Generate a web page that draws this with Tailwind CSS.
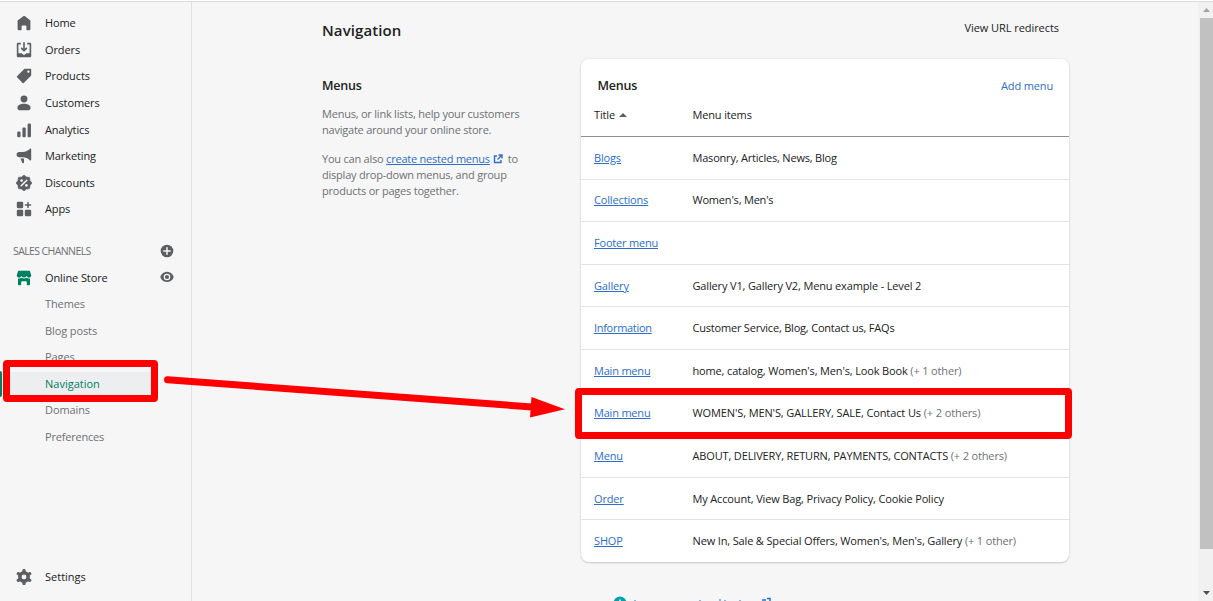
<!DOCTYPE html>
<html lang="en">
<head>
<meta charset="utf-8">
<title>Navigation</title>
<script src="https://cdn.jsdelivr.net/npm/@tailwindcss/browser@4"></script>
</head>
<body class="relative h-[601px] w-[1213px] overflow-hidden bg-[#f6f6f6] font-['Open_Sans','Noto_Sans',sans-serif] text-[11px] text-[#202223]">
<div class="flex h-full flex-col">
  <div class="h-0.5 shrink-0 border-b border-[#d9dbdb] bg-white"></div>
  <div class="flex min-h-0 flex-1">
    <aside class="flex w-48 shrink-0 flex-col border-r border-[#dfe1e2] pt-2 font-medium tracking-[-0.1px]">
      <nav class="flex flex-col">
        <a class="flex h-[26.6px] items-center gap-[13px] pl-4"><svg class="size-4 fill-[#5c5f62]" viewBox="0 0 20 20"><path d="M10 1 2 7v10.500Q2 19 3.500 19H6q1 0 1-1v-4q0-1 1-1h4q1 0 1 1v4q0 1 1 1h2.500q1.500 0 1.500-1.500V7L11.300 1.500Q10 .500 8.700 1.500Z"/></svg><span>Home</span></a>
        <a class="flex h-[26.6px] items-center gap-[13px] pl-4"><svg class="size-4 fill-[#5c5f62]" viewBox="0 0 20 20"><path d="M11 1a1 1 0 1 0-2 0v7.586L7.707 7.293a1 1 0 0 0-1.414 1.414l3 3a1 1 0 0 0 1.414 0l3-3a1 1 0 0 0-1.414-1.414L11 8.586V1z"/><path d="M3 14V3h3V1H2.500A1.500 1.500 0 0 0 1 2.500v15A1.500 1.500 0 0 0 2.500 19h15a1.500 1.500 0 0 0 1.500-1.500v-15A1.500 1.500 0 0 0 17.500 1H14v2h3v11h-3.500c-.775 0-1.388.662-1.926 1.244C11.200 15.640 10.800 16 10.500 16h-1c-.300 0-.700-.360-1.074-.756C7.888 14.662 7.275 14 6.500 14H3z"/></svg><span>Orders</span></a>
        <a class="flex h-[26.6px] items-center gap-[13px] pl-4"><svg class="size-4 fill-[#5c5f62]" viewBox="0 0 20 20"><path fill-rule="evenodd" d="m10.293 1.293-9 9a1 1 0 0 0 0 1.414l7 7a1 1 0 0 0 1.414 0l9-9A1 1 0 0 0 19 9V2a1 1 0 0 0-1-1h-7a1 1 0 0 0-.707.293zM15.500 6a1.500 1.500 0 1 0 0-3 1.500 1.500 0 0 0 0 3z"/></svg><span>Products</span></a>
        <a class="flex h-[26.6px] items-center gap-[13px] pl-4"><svg class="size-4 fill-[#5c5f62]" viewBox="0 0 20 20"><circle cx="10" cy="5" r="4.300"/><path d="M1.800 16c0-3 3.200-5 8.200-5s8.200 2 8.200 5c0 2-1 3-2.500 3H4.300c-1.500 0-2.500-1-2.500-3z"/></svg><span>Customers</span></a>
        <a class="flex h-[26.6px] items-center gap-[13px] pl-4"><svg class="size-4 fill-[#5c5f62]" viewBox="0 0 20 20"><rect x="1.500" y="12" width="4.200" height="7" rx="1.500"/><rect x="8" y="7" width="4.200" height="12" rx="1.500"/><rect x="14.500" y="2" width="4.200" height="17" rx="1.500"/></svg><span class="pt-px">Analytics</span></a>
        <a class="flex h-[26.6px] items-center gap-[13px] pl-4"><svg class="size-4 fill-[#5c5f62]" viewBox="0 0 20 20"><path d="M17.500 1C15 3.500 12 5 8.500 5H4a3.200 3.200 0 0 0 0 6.500h4.500c3.500 0 6.500 1.500 9 4 .700.500 1.500.200 1.500-.700V1.700c0-.900-.800-1.300-1.500-.700z"/><path d="M5.500 13H10v4.700c0 1.300-1.500 1.700-2.200.600z"/></svg><span>Marketing</span></a>
        <a class="flex h-[26.6px] items-center gap-[13px] pl-4"><svg class="size-4 fill-[#5c5f62]" viewBox="0 0 20 20"><path d="M10 0 13 2.500 17 3l.500 4L20 10l-2.500 3-.500 4-4 .500L10 20l-3-2.500L3 17l-.500-4L0 10l2.500-3L3 3l4-.500z" stroke="#5c5f62" stroke-width=".8" stroke-linejoin="round"/><path d="m6.500 13.500 7-7" stroke="#f6f6f6" stroke-width="1.900" stroke-linecap="round"/><circle cx="7" cy="7" r="1.600" fill="#f6f6f6"/><circle cx="13" cy="13" r="1.600" fill="#f6f6f6"/></svg><span>Discounts</span></a>
        <a class="flex h-[26.6px] items-center gap-[13px] pl-4"><svg class="size-4 fill-[#5c5f62]" viewBox="0 0 20 20"><rect x="1" y="1" width="8" height="8" rx="1.400"/><rect x="1" y="11" width="8" height="8" rx="1.400"/><rect x="11" y="11" width="8" height="8" rx="1.400"/><path d="M15 1.800v6.400M11.800 5h6.400" stroke="#5c5f62" stroke-width="1.900" stroke-linecap="round"/></svg><span>Apps</span></a>
      </nav>
      <div class="mt-[15px] flex h-[27px] items-center justify-between pl-[13px] pr-[17px] font-normal text-[#6d7175]"><span class="pt-px text-[10.500px] tracking-[-0.600px]">SALES CHANNELS</span><svg class="size-[14px]" viewBox="0 0 14 14"><circle cx="7" cy="7" r="6.300" fill="#5c5f62"/><path d="M7 3.800v6.400M3.800 7h6.400" stroke="#f6f6f6" stroke-width="1.500" stroke-linecap="round"/></svg></div>
      <nav class="flex flex-col text-[#6d7175]">
        <a class="flex h-[26.5px] items-center pl-4 pr-[17px] text-[#202223]"><svg class="mr-[13px] size-4 fill-[#008060]" viewBox="0 0 20 20"><path d="M3.500 1h13q.700 0 1 .700L19 6.500C19 8.500 17.800 9.500 16.200 9.500S13.500 8.500 13 7.500c-.500 1-1.500 2-3 2s-2.500-1-3-2c-.500 1-1.600 2-3.200 2S1 8.500 1 6.500l1.500-4.800q.300-.700 1-.700z"/><path d="M2.500 10.500q2.500.500 4.500-.800 3 1.800 6 0 2 1.300 4.500.800V18q0 1-1 1h-2q-1 0-1-1v-3q0-1-1-1h-5q-1 0-1 1v3q0 1-1 1h-2q-1 0-1-1z"/></svg><span class="flex-1">Online Store</span><svg class="mb-0.5 size-[14px]" viewBox="0 0 14 14"><path fill="#5c5f62" d="M7 1.700c4.400 0 6.600 4 6.600 5.300S11.400 12 7 12 .4 8.300.4 7 2.600 1.700 7 1.700z"/><circle cx="7" cy="7" r="2.700" fill="none" stroke="#f6f6f6" stroke-width="1.200"/></svg></a>
        <a class="flex h-[26.5px] items-center pl-[45px]">Themes</a>
        <a class="flex h-[26.5px] items-center pl-[45px]">Blog posts</a>
        <a class="flex h-[26.5px] items-center pl-[45px]">Pages</a>
        <a class="flex h-[26.5px] items-center tracking-normal text-[#008060]"><span class="h-[26px] w-0.5 rounded-r bg-[#008060]"></span><span class="ml-[5px] mr-[38px] flex h-6 flex-1 items-center bg-[#edeeef] pl-[38px]">Navigation</span></a>
        <a class="flex h-[26.5px] items-center pl-[45px]">Domains</a>
        <a class="flex h-[26.5px] items-center pl-[45px] tracking-[-0.2px]">Preferences</a>
      </nav>
      <a class="mb-[11px] mt-auto flex h-[26.6px] items-center gap-[13px] pl-4 tracking-normal"><svg class="size-4" viewBox="0 0 20 20"><circle cx="10" cy="10" r="5.200" fill="none" stroke="#5c5f62" stroke-width="4.400"/><path d="M10 1.800v3M10 15.200v3M2.800 5.900l2.600 1.500M14.600 12.600l2.600 1.500M17.200 5.900l-2.600 1.500M5.400 12.600l-2.600 1.500" stroke="#5c5f62" stroke-width="4" stroke-linecap="round"/></svg><span class="pt-px">Settings</span></a>
    </aside>
    <main class="min-w-0 flex-1 pl-[130px]">
      <header class="flex h-[57px] w-[748px] items-start justify-between pr-[11px]">
        <h1 class="pt-[17px] text-[15px] font-semibold leading-[22px] tracking-[0.1px]">Navigation</h1>
        <a class="pt-[18px] font-medium leading-4 tracking-[-0.06px]">View URL redirects</a>
      </header>
      <div class="flex w-[748px]">
        <section class="w-[259px] shrink-0 pt-[17px] leading-4 tracking-[-0.220px] text-[#6d7175]">
          <h2 class="text-[12.500px] font-semibold leading-[19px] text-[#202223]">Menus</h2>
          <p class="mt-[11px]">Menus, or link lists, help your customers<br>navigate around your online store.</p>
          <p class="mt-[13px]">You can also <a class="text-[#2c6ecb] underline">create nested menus</a> <svg class="inline size-2.5 align-[-1px]" viewBox="0 0 10 10" fill="none" stroke="#2c6ecb" stroke-width="1.400"><path d="M4 2H1.500v6.500H8V6M5.500 1H9v3.500M9 1 4.500 5.500"/></svg>&nbsp; to<br>display drop-down menus, and group<br>products or pages together.</p>
        </section>
        <section class="h-[503px] w-[488px] rounded-lg bg-white tracking-[-0.150px] shadow-[0_0_3px_rgba(23,24,24,0.08),0_1px_2px_rgba(0,0,0,0.16)]">
          <div class="flex h-[45px] items-center justify-between pl-[16.500px] pr-4 pt-[9px]"><h2 class="text-[12.500px] font-semibold tracking-[-0.2px]">Menus</h2><a class="text-[#2c6ecb]">Add menu</a></div>
          <div class="flex h-[33px] border-b border-[#8c9196] pl-[13px] pt-0.5 leading-[17px]"><span class="w-[98.500px]">Title <svg class="ml-px inline h-1 w-2 align-[2px]" viewBox="0 0 8 4"><path d="M0 4 4 0l4 4z" fill="#5c5f62"/></svg></span><span>Menu items</span></div>
          <div class="flex flex-col divide-y divide-[#e1e3e5]">
            <div class="flex h-[42.600px] items-center pl-[13px]"><a class="w-[98.500px] text-[#2c6ecb] underline">Blogs</a><span class="tracking-[-0.2px]">Masonry, Articles, News, Blog</span></div>
            <div class="flex h-[42.600px] items-center pl-[13px]"><a class="w-[98.500px] text-[#2c6ecb] underline">Collections</a><span class="tracking-[-0.2px]">Women's, Men's</span></div>
            <div class="flex h-[42.600px] items-center pl-[13px]"><a class="w-[98.500px] tracking-[-0.2px] text-[#2c6ecb] underline">Footer menu</a></div>
            <div class="flex h-[42.600px] items-center pl-[13px] pt-px"><a class="w-[98.500px] text-[#2c6ecb] underline">Gallery</a><span>Gallery V1, Gallery V2, Menu example - Level 2</span></div>
            <div class="flex h-[42.600px] items-center pl-[13px]"><a class="w-[98.500px] tracking-[-0.300px] text-[#2c6ecb] underline">Information</a><span class="tracking-[-0.2px]">Customer Service, Blog, Contact us, FAQs</span></div>
            <div class="flex h-[42.600px] items-center pl-[13px]"><a class="w-[98.500px] tracking-[-0.2px] text-[#2c6ecb] underline">Main menu</a><span>home, catalog, Women's, Men's, Look Book <span class="text-[#6d7175]">(+ 1 other)</span></span></div>
            <div class="flex h-[42.600px] items-center pl-[13px]"><a class="w-[98.500px] tracking-[-0.2px] text-[#2c6ecb] underline">Main menu</a><span class="tracking-[-0.110px]">WOMEN'S, MEN'S, GALLERY, SALE, Contact Us <span class="text-[#6d7175]">(+ 2 others)</span></span></div>
            <div class="flex h-[42.600px] items-center pl-[13px]"><a class="w-[98.500px] text-[#2c6ecb] underline">Menu</a><span>ABOUT, DELIVERY, RETURN, PAYMENTS, CONTACTS <span class="text-[#6d7175]">(+ 2 others)</span></span></div>
            <div class="flex h-[42.600px] items-center pl-[13px] pt-px"><a class="w-[98.500px] text-[#2c6ecb] underline">Order</a><span>My Account, View Bag, Privacy Policy, Cookie Policy</span></div>
            <div class="flex h-[42.600px] items-center pl-[13px]"><a class="w-[98.500px] text-[#2c6ecb] underline">SHOP</a><span>New In, Sale &amp; Special Offers, Women's, Men's, Gallery <span class="text-[#6d7175]">(+ 1 other)</span></span></div>
          </div>
        </section>
      </div>
      <svg class="ml-[291px] mt-[34px] h-[5px] w-[170px]" viewBox="0 0 170 5"><circle cx="7" cy="7" r="6.500" fill="#00a0ac"/><path d="M7 3.500V5" stroke="#f6f6f6" stroke-width="1.500"/><path d="M22 4v1M87 4v1M107 3v2M112 4v1M127 4v1" stroke="#2c6ecb"/><path d="M149 4h4M154 2.500h3V5" fill="none" stroke="#2c6ecb" stroke-width="1.500"/></svg>
    </main>
    <div class="flex w-[15px] shrink-0 flex-col items-center bg-[#f1f1f1] pl-0.5">
      <svg class="h-4 w-[13px] shrink-0" viewBox="0 0 13 16"><path d="M3 10h7L6.500 6z" fill="#a3a3a3"/></svg>
      <div class="h-[531px] w-full bg-[#c1c1c1]"></div>
      <svg class="mt-auto h-4 w-[13px] shrink-0" viewBox="0 0 13 16"><path d="M3 6h7L6.500 10z" fill="#505050"/></svg>
    </div>
  </div>
</div>
<div class="absolute left-[3px] top-[360px] h-[42px] w-[155px] rounded border-[7px] border-[#ff0000]"></div>
<div class="absolute left-[575px] top-[388px] h-[51px] w-[497px] rounded border-[7px] border-[#ff0000]"></div>
<svg class="absolute left-[160px] top-[370px] h-[52px] w-[410px]" viewBox="160 370 410 52"><path d="M167.500 379.700 532 407" stroke="#f00" stroke-width="7" stroke-linecap="round"/><path d="M531.500 397 565 409.300 530 417.500z" fill="#f00"/></svg>
</body>
</html>
